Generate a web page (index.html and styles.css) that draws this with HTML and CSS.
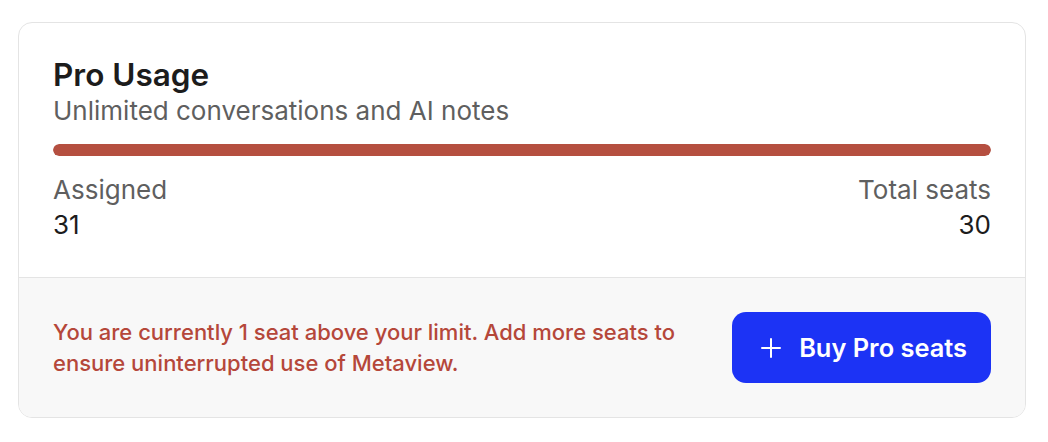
FILE: index.html
```html
<!DOCTYPE html>
<html>
<head>
<meta charset="utf-8">
<link rel="stylesheet" href="styles.css">
</head>
<body>
<div class="card">
  <div class="top">
    <div class="title">Pro Usage</div>
    <div class="subtitle">Unlimited conversations and AI notes</div>
    <div class="bar"><div class="bar-fill" style="width:100%"></div></div>
    <div class="stats">
      <div class="stat">
        <div class="label">Assigned</div>
        <div class="value">31</div>
      </div>
      <div class="stat stat-right">
        <div class="label">Total seats</div>
        <div class="value">30</div>
      </div>
    </div>
  </div>
  <div class="footer">
    <p class="warning">You are currently 1 seat above your limit. Add more seats to ensure uninterrupted use of Metaview.</p>
    <button class="buy">
      <svg class="plus" width="20" height="20" viewBox="0 0 20 20"><path d="M10 1v18M1 10h18" stroke="#fff" stroke-width="2" stroke-linecap="round"/></svg>
      <span>Buy Pro seats</span>
    </button>
  </div>
</div>
</body>
</html>
```
FILE: styles.css
```css
* { box-sizing: border-box; }
html, body { margin: 0; padding: 0; background: #fff; }
body {
  padding: 22px 22px 24px 18px;
  font-family: Inter, "Noto Sans", sans-serif;
  color: #1f1f1f;
}
.card {
  width: 1008px;
  border: 1.5px solid #e4e4e4;
  border-radius: 14px;
  overflow: hidden;
  background: #fff;
}
.top {
  padding: 33px 34px 34px 34px;
}
.title {
  font-size: 31.5px;
  font-weight: 600;
  line-height: 38px;
  color: #1c1c1c;
}
.subtitle {
  font-size: 26px;
  line-height: 34px;
  color: #5f5f5f;
}
.bar {
  margin-top: 16px;
  height: 12px;
  border-radius: 6px;
  background: #eee;
  overflow: hidden;
}
.bar-fill {
  height: 100%;
  background: #b54f40;
  border-radius: 6px;
}
.stats {
  margin-top: 16px;
  display: flex;
  justify-content: space-between;
}
.stat-right { text-align: right; }
.label {
  font-size: 26px;
  line-height: 35px;
  color: #5f5f5f;
}
.value {
  font-size: 26px;
  line-height: 36px;
  color: #1c1c1c;
}
.footer {
  border-top: 1.5px solid #e4e4e4;
  background: #f8f8f8;
  padding: 34px 34px;
  display: flex;
  align-items: center;
  justify-content: space-between;
}
.warning {
  margin: 0;
  max-width: 640px;
  font-size: 22px;
  line-height: 31px;
  font-weight: 500;
  color: #b5473a;
}
.buy {
  display: flex;
  align-items: center;
  gap: 18px;
  height: 71px;
  padding: 0 24px 0 29px;
  border: none;
  border-radius: 14px;
  background: #1c33f5;
  color: #fff;
  font-family: Inter, "Noto Sans", sans-serif;
  font-size: 25.4px;
  font-weight: 600;
}
.plus { flex: none; }
```
